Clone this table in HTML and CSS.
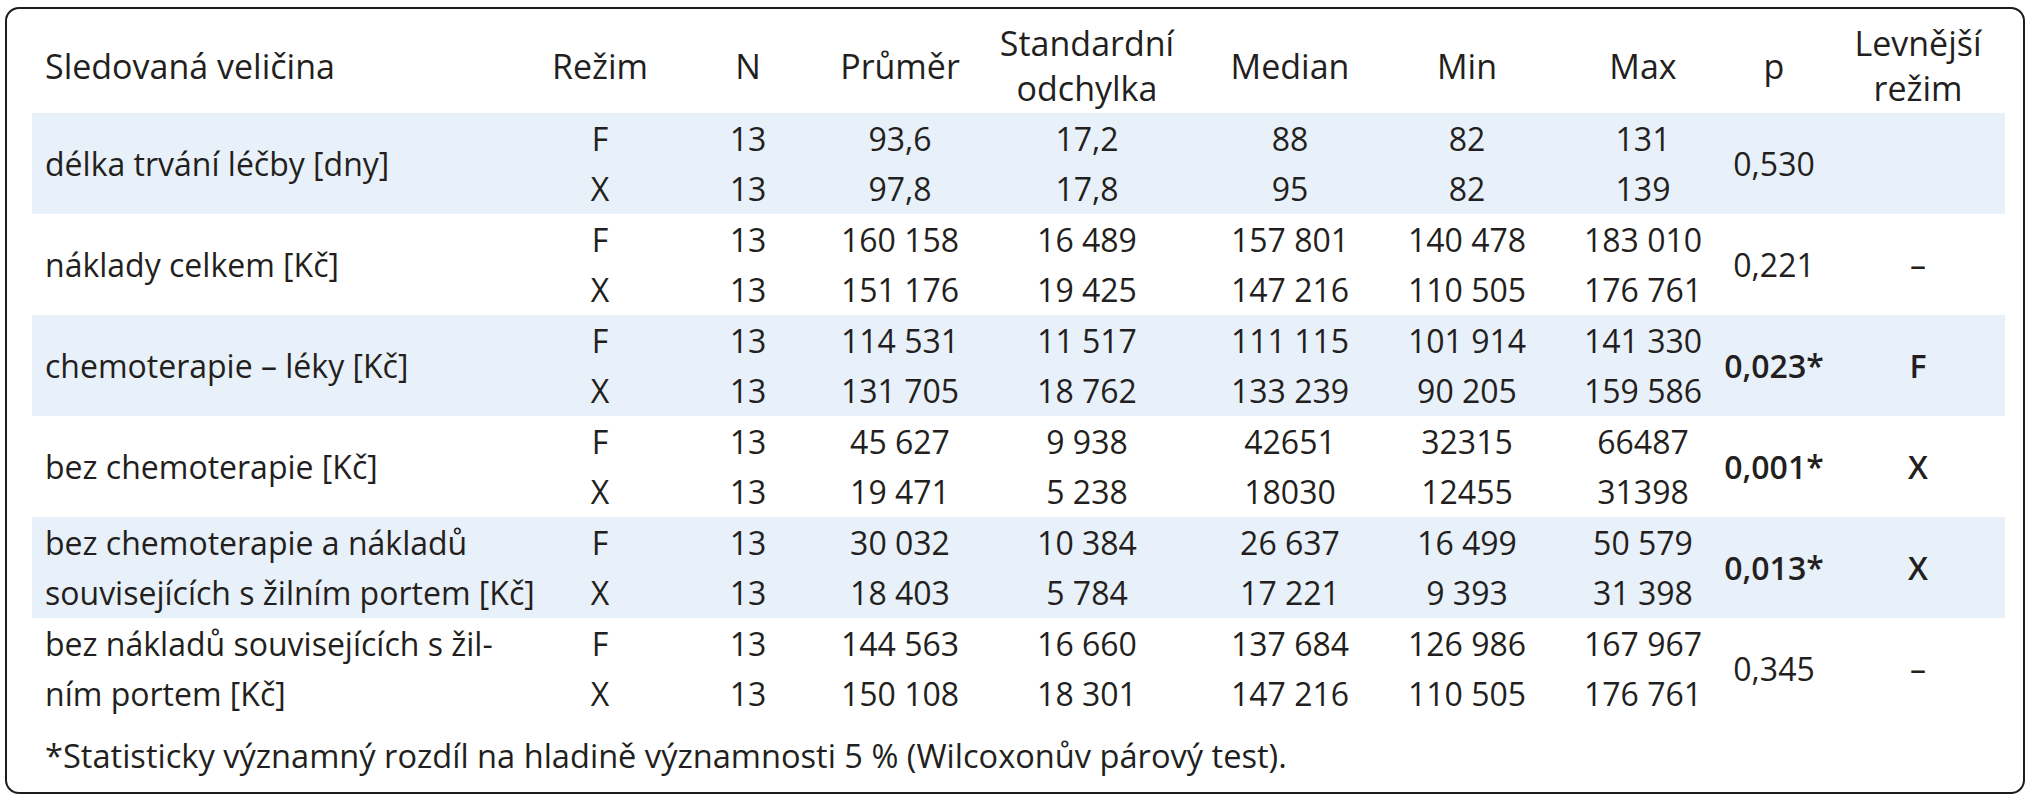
FILE: index.html
```html
<!DOCTYPE html>
<html lang="cs">
<head>
<meta charset="utf-8">
<title>Tabulka</title>
<link rel="stylesheet" href="styles.css">
</head>
<body>
<div class="frame">
  <div class="row head">
    <div class="c label">Sledovaná veličina</div>
    <div class="c">Režim</div>
    <div class="c">N</div>
    <div class="c">Průměr</div>
    <div class="c">Standardní<br>odchylka</div>
    <div class="c">Median</div>
    <div class="c">Min</div>
    <div class="c">Max</div>
    <div class="c">p</div>
    <div class="c">Levnější<br>režim</div>
  </div>

  <div class="row shade">
    <div class="c label">délka trvání léčby [dny]</div>
    <div class="c"><span>F</span><span>X</span></div>
    <div class="c"><span>13</span><span>13</span></div>
    <div class="c"><span>93,6</span><span>97,8</span></div>
    <div class="c"><span>17,2</span><span>17,8</span></div>
    <div class="c"><span>88</span><span>95</span></div>
    <div class="c"><span>82</span><span>82</span></div>
    <div class="c"><span>131</span><span>139</span></div>
    <div class="c">0,530</div>
    <div class="c"></div>
  </div>

  <div class="row">
    <div class="c label">náklady celkem [Kč]</div>
    <div class="c"><span>F</span><span>X</span></div>
    <div class="c"><span>13</span><span>13</span></div>
    <div class="c"><span>160 158</span><span>151 176</span></div>
    <div class="c"><span>16 489</span><span>19 425</span></div>
    <div class="c"><span>157 801</span><span>147 216</span></div>
    <div class="c"><span>140 478</span><span>110 505</span></div>
    <div class="c"><span>183 010</span><span>176 761</span></div>
    <div class="c">0,221</div>
    <div class="c">–</div>
  </div>

  <div class="row shade">
    <div class="c label">chemoterapie – léky [Kč]</div>
    <div class="c"><span>F</span><span>X</span></div>
    <div class="c"><span>13</span><span>13</span></div>
    <div class="c"><span>114 531</span><span>131 705</span></div>
    <div class="c"><span>11 517</span><span>18 762</span></div>
    <div class="c"><span>111 115</span><span>133 239</span></div>
    <div class="c"><span>101 914</span><span>90 205</span></div>
    <div class="c"><span>141 330</span><span>159 586</span></div>
    <div class="c strong">0,023*</div>
    <div class="c strong">F</div>
  </div>

  <div class="row">
    <div class="c label">bez chemoterapie [Kč]</div>
    <div class="c"><span>F</span><span>X</span></div>
    <div class="c"><span>13</span><span>13</span></div>
    <div class="c"><span>45 627</span><span>19 471</span></div>
    <div class="c"><span>9 938</span><span>5 238</span></div>
    <div class="c"><span>42651</span><span>18030</span></div>
    <div class="c"><span>32315</span><span>12455</span></div>
    <div class="c"><span>66487</span><span>31398</span></div>
    <div class="c strong">0,001*</div>
    <div class="c strong">X</div>
  </div>

  <div class="row shade">
    <div class="c label"><span>bez chemoterapie a nákladů</span><span>souvisejících s žilním portem [Kč]</span></div>
    <div class="c"><span>F</span><span>X</span></div>
    <div class="c"><span>13</span><span>13</span></div>
    <div class="c"><span>30 032</span><span>18 403</span></div>
    <div class="c"><span>10 384</span><span>5 784</span></div>
    <div class="c"><span>26 637</span><span>17 221</span></div>
    <div class="c"><span>16 499</span><span>9 393</span></div>
    <div class="c"><span>50 579</span><span>31 398</span></div>
    <div class="c strong">0,013*</div>
    <div class="c strong">X</div>
  </div>

  <div class="row">
    <div class="c label"><span>bez nákladů souvisejících s žil-</span><span>ním portem [Kč]</span></div>
    <div class="c"><span>F</span><span>X</span></div>
    <div class="c"><span>13</span><span>13</span></div>
    <div class="c"><span>144 563</span><span>150 108</span></div>
    <div class="c"><span>16 660</span><span>18 301</span></div>
    <div class="c"><span>137 684</span><span>147 216</span></div>
    <div class="c"><span>126 986</span><span>110 505</span></div>
    <div class="c"><span>167 967</span><span>176 761</span></div>
    <div class="c">0,345</div>
    <div class="c">–</div>
  </div>

  <p class="note">*Statisticky významný rozdíl na hladině významnosti 5 % (Wilcoxonův párový test).</p>
</div>
</body>
</html>
```

FILE: styles.css
```css
html, body {
  margin: 0;
  padding: 0;
  background: #ffffff;
}

body {
  font-family: "Open Sans", "Noto Sans", "DejaVu Sans", sans-serif;
  font-size: 32px;
  color: #231f20;
}

.frame {
  box-sizing: border-box;
  width: 2020px;
  height: 787px;
  margin: 7px 0 0 5px;
  border: 2px solid #1c1c1c;
  border-radius: 14px;
  padding: 0 18px 0 25px;
}

.row {
  display: grid;
  grid-template-columns: 513px 110px 186px 118px 256px 150px 204px 148px 114px 174px;
  height: 101px;
  line-height: 50px;
}

.row.head {
  height: 94px;
  padding-top: 10px;
  line-height: 45px;
  font-size: 34px;
  font-weight: 500;
}

.row.shade {
  background: #e8f0f9;
}

.c {
  display: flex;
  flex-direction: column;
  justify-content: center;
  align-items: center;
  text-align: center;
  white-space: nowrap;
}

.c span {
  display: block;
}

.c.label {
  align-items: flex-start;
  text-align: left;
  padding-left: 13px;
}

.c.strong {
  font-weight: 600;
}

.note {
  margin: 12px 0 0 13px;
  line-height: 50px;
  font-size: 32.6px;
}
```
